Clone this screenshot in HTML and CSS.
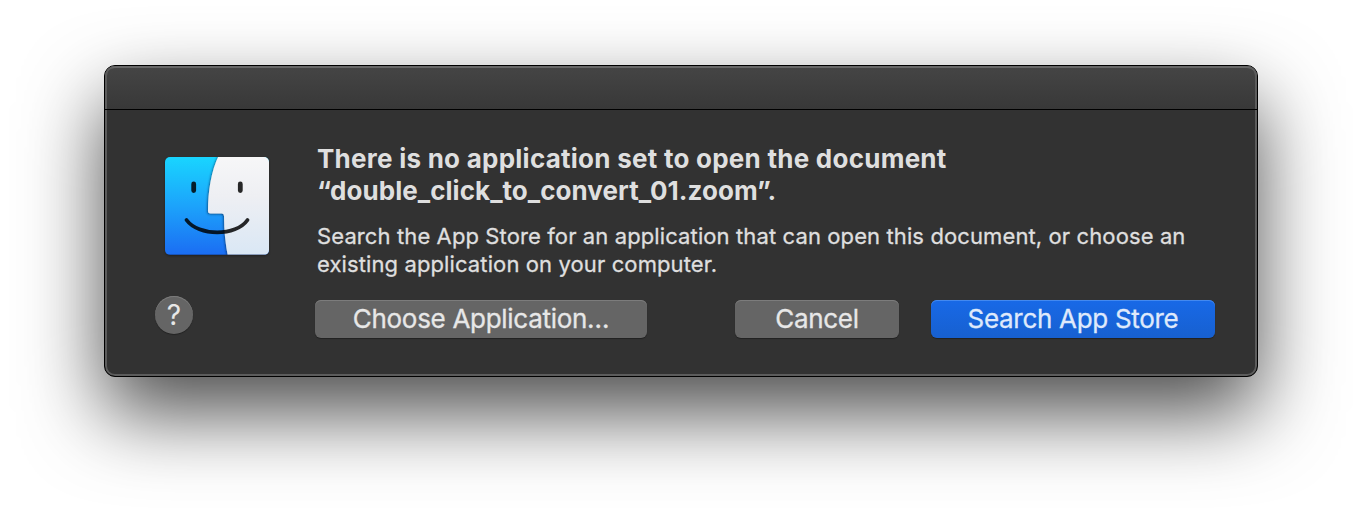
FILE: index.html
```html
<!DOCTYPE html>
<html lang="en">
<head>
<meta charset="utf-8">
<title>Open document</title>
<link rel="stylesheet" href="styles.css">
</head>
<body>
<main class="dialog">
  <header class="titlebar"></header>
  <section class="content">
    <aside class="side">
      <svg class="finder" viewBox="0 0 104 98" aria-label="Finder">
        <defs>
          <linearGradient id="blue" x1="0" y1="0" x2="0" y2="1"><stop offset="0" stop-color="#19d5ff"/><stop offset=".5" stop-color="#1ca3fb"/><stop offset="1" stop-color="#1b6df3"/></linearGradient>
          <linearGradient id="pale" x1="0" y1="0" x2="0" y2="1"><stop offset="0" stop-color="#f7f7f8"/><stop offset=".4" stop-color="#eeeff3"/><stop offset="1" stop-color="#d9e7f5"/></linearGradient>
          <clipPath id="tile"><rect width="104" height="98" rx="5"/></clipPath>
          <filter id="soft" x="-20%" y="-20%" width="140%" height="140%"><feDropShadow dx="-.6" dy=".6" stdDeviation=".9" flood-color="#002b58" flood-opacity=".8"/></filter>
        </defs>
        <g clip-path="url(#tile)">
          <rect width="104" height="98" fill="url(#blue)"/>
          <path d="M54-2C46 14 43 35 43 54Q43 56.5 45.500 56.500H57Q59 56.500 59 59C59 74 60.500 87 63 100H110V-2Z" fill="url(#pale)" filter="url(#soft)"/>
          <path d="M0 97.500H104" stroke="#153064" stroke-opacity=".4"/>
        </g>
        <path d="M28.700 27V33.500M75.300 27V33.500" class="eyes"/>
        <path d="M21.500 63C33.500 79.500 71 79.500 82.500 63" class="smile"/>
      </svg>
      <button class="help">?</button>
    </aside>
    <div class="main">
      <h1 class="title"><span class="t1">There is no application set to open the document</span><br><span class="t2">“double_click_to_convert_01.zoom”.</span></h1>
      <p class="message">Search the App Store for an application that can open this document, or choose an<br>existing application on your computer.</p>
      <div class="actions">
        <button class="button choose">Choose Application…</button>
        <button class="button cancel">Cancel</button>
        <button class="button primary">Search App Store</button>
      </div>
    </div>
  </section>
</main>
</body>
</html>
```
FILE: styles.css
```css
* { box-sizing: border-box; }
body {
  margin: 0;
  height: 514px;
  padding: 65px 104px;
  overflow: hidden;
  background: #fff;
  font-family: Inter, "Liberation Sans", sans-serif;
}
.dialog {
  width: 1154px;
  height: 312px;
  border: 1px solid #000;
  border-radius: 11px;
  background: #323232;
  box-shadow: inset 0 0 0 2px #5c5c5c, 0 36px 80px rgba(0, 0, 0, .7);
}
.titlebar {
  height: 44px;
  border-bottom: 1px solid #000;
  border-radius: 10px 10px 0 0;
  background: linear-gradient(#454545, #383838);
  box-shadow: inset 2px 0 #5c5c5c, inset -2px 0 #5c5c5c, inset 0 2px #686868;
}
.content { display: flex; }
.side { width: 212px; padding: 47px 0 0 50px; }
.finder {
  display: block;
  width: 104px;
  height: 98px;
  margin-left: 10px;
  overflow: visible;
  filter: drop-shadow(0 1px 1px rgba(0, 0, 0, .35));
}
.eyes, .smile { fill: none; stroke: #000; stroke-opacity: .84; stroke-linecap: round; }
.eyes { stroke-width: 4.8; }
.smile { stroke-width: 3.8; }
.help {
  display: block;
  width: 38px;
  height: 38px;
  margin-top: 41px;
  padding: 0;
  border: 0;
  border-radius: 50%;
  background: #656565;
  color: #e7e7e7;
  font: 400 28px/39px Inter, sans-serif;
  box-shadow: inset 0 1px #7c7c7c, 0 1px 1px rgba(0, 0, 0, .3);
}
.main { padding-top: 33px; }
.title, .message { margin: 0; white-space: nowrap; color: #dfdfdf; }
.title { font-size: 26px; line-height: 32px; font-weight: 700; }
.t1 { letter-spacing: .25px; }
.t2 { letter-spacing: .04px; }
.message {
  margin-top: 15px;
  font-size: 22px;
  line-height: 28px;
  letter-spacing: .11px;
  -webkit-text-stroke: .3px #dfdfdf;
}
.actions { display: flex; margin: 22px 0 0 -2px; }
.button {
  height: 38px;
  padding: 0;
  border: 0;
  border-radius: 6px;
  background: #656565;
  color: #e7e7e7;
  font: 400 26px/38px Inter, sans-serif;
  letter-spacing: -.3px;
  -webkit-text-stroke: .3px #e7e7e7;
  white-space: nowrap;
  box-shadow: inset 0 1px #7c7c7c, 0 1px 1px rgba(0, 0, 0, .35);
}
.choose { width: 332px; }
.cancel { width: 164px; margin-left: 88px; }
.primary {
  width: 284px;
  margin-left: 32px;
  background: linear-gradient(#1869e7, #1760d0);
  color: #dfe9fb;
  -webkit-text-stroke-color: #dfe9fb;
  box-shadow: inset 0 1px #4389f0, 0 1px 1px rgba(0, 0, 0, .35);
}
```
